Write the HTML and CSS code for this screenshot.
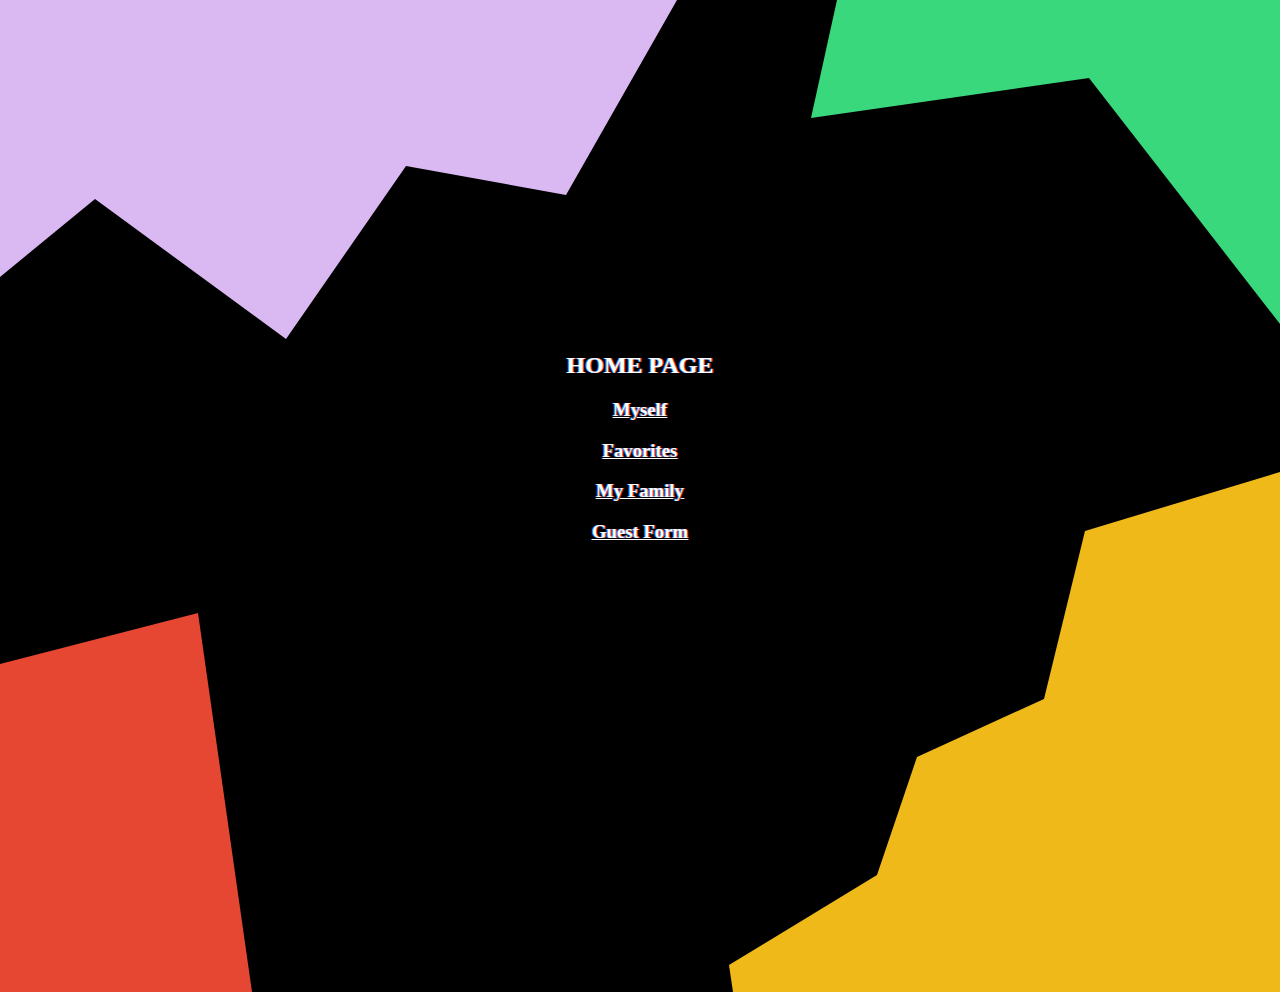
FILE: index.html
```html
<!DOCTYPE html>
<html lang="en">
<head>
<meta charset="utf-8">
<title>Home Page</title>
<link rel="stylesheet" href="styles.css">
</head>
<body>
<svg class="backdrop" width="1280" height="992" viewBox="0 0 1280 992" aria-hidden="true">
  <polygon class="shape-purple" points="0,0 677,0 566,195 406,166 286,339 95,199 0,277"/>
  <polygon class="shape-green" points="837,0 1280,0 1280,324 1089,78 811,118"/>
  <polygon class="shape-red" points="0,664 198,613 252,992 0,992"/>
  <polygon class="shape-yellow" points="1280,472 1085,531 1044,699 917,757 877,875 729,965 733,992 1280,992"/>
</svg>
<main class="content">
  <h2 class="title">HOME PAGE</h2>
  <h3 class="nav-item"><a href="#">Myself</a></h3>
  <h3 class="nav-item"><a href="#">Favorites</a></h3>
  <h3 class="nav-item"><a href="#">My Family</a></h3>
  <h3 class="nav-item"><a href="#">Guest Form</a></h3>
</main>
</body>
</html>
```
FILE: styles.css
```css
html, body {
  margin: 0;
  padding: 0;
  background: #000;
  height: 100%;
  overflow: hidden;
}

body {
  font-family: "Liberation Serif", "Times New Roman", serif;
  color: #fff;
  position: relative;
}

.backdrop {
  position: absolute;
  left: 0;
  top: 0;
  display: block;
}

.shape-purple { fill: #dab8f1; }
.shape-green { fill: #3ad87c; }
.shape-red { fill: #e64732; }
.shape-yellow { fill: #f0b91a; }

.content {
  position: relative;
  padding-top: 332px;
  text-align: center;
}

.title {
  font-size: 24px;
  font-weight: bold;
  margin: 19.92px 0;
  text-shadow: -1px 0 #1a8cff, 1px 0 #ff3a1a;
}

.nav-item {
  font-size: 18.72px;
  font-weight: bold;
  margin: 18.72px 0;
}

.nav-item a {
  color: #fff;
  text-decoration: underline;
  text-shadow: -1px 0 #1a8cff, 1px 0 #ff3a1a;
}
```
